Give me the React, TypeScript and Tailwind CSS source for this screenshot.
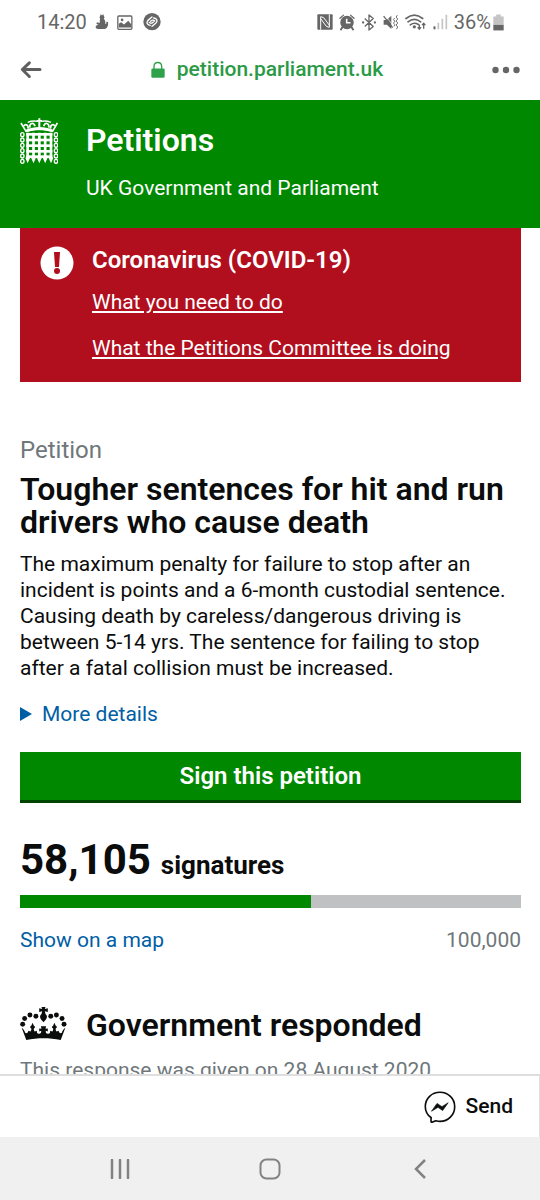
import React from 'react';

const signatures = 58105;
const target = 100000;

function FigureIcon() {
  return (
    <svg viewBox="284 42 42 48" className="h-4 w-[14px]" fill="#666" aria-hidden="true">
      <circle cx="305" cy="52" r="7" />
      <path d="M299 47l2-4 4 3zM311 47l-2-4-4 3zM299 56h12c3 5 5 10 4 16 3 0 4-3 3-7l5 1c2 13-4 21-12 21h-17c-5 0-8-3-8-6 0-4 4-6 9-6l-7-4 2-4 8 2z" />
    </svg>
  );
}

function PictureIcon() {
  return (
    <svg viewBox="356 44 48 46" className="h-[15px] w-4" aria-hidden="true">
      <rect x="358" y="47" width="43" height="41" rx="3" fill="none" stroke="#666" strokeWidth="4" />
      <circle cx="371" cy="59" r="4" fill="#666" />
      <path d="M361 82V71l7-5 9 7 13-11 9 10v10z" fill="#666" />
    </svg>
  );
}

function ShazamIcon() {
  return (
    <svg viewBox="428 42 54 54" className="size-[18px]" aria-hidden="true">
      <circle cx="455" cy="68" r="26" fill="#666" />
      <path
        d="M450 79c-8 0-12-7-9-12 2-4 6-6 14-13M447 70c4 5 9 2 12-1M460 57c8 0 12 7 9 12-2 4-6 6-14 13M463 66c-4-5-9-2-12 1"
        fill="none"
        stroke="#fff"
        strokeWidth="4"
        strokeLinecap="round"
      />
    </svg>
  );
}

function NfcIcon() {
  return (
    <svg viewBox="47 42 48 48" className="size-4" aria-hidden="true">
      <rect x="48" y="43" width="46" height="46" rx="3" fill="#666" />
      <path d="M58 89V50l9 3 18 24M84 43v39l-9-3-17-23" fill="none" stroke="#fff" strokeWidth="3" />
    </svg>
  );
}

function AlarmIcon() {
  return (
    <svg viewBox="116 40 50 52" className="h-[17px] w-4" aria-hidden="true">
      <path d="M119 53l11-10M163 53l-11-10" stroke="#666" strokeWidth="4" strokeLinecap="round" />
      <path d="M127 80l-5 8M155 80l5 8" stroke="#666" strokeWidth="6" strokeLinecap="round" />
      <circle cx="141" cy="66" r="21" fill="#666" />
      <path d="M140 54v13h12" stroke="#fff" strokeWidth="5" fill="none" />
    </svg>
  );
}

function BluetoothIcon() {
  return (
    <svg viewBox="188 40 46 52" className="h-[17px] w-4" aria-hidden="true">
      <path d="M198 54l26 24-13 11V43l13 11-26 24" fill="none" stroke="#666" strokeWidth="4" strokeLinejoin="round" />
      <circle cx="193" cy="66" r="3.500" fill="#666" />
      <circle cx="229" cy="66" r="3.500" fill="#666" />
    </svg>
  );
}

function MuteIcon() {
  return (
    <svg viewBox="254 40 50 52" className="h-[17px] w-4" aria-hidden="true">
      <path d="M256 58h10l14-13v41l-14-13h-10z" fill="#666" />
      <path d="M260 43l27 34" stroke="#fff" strokeWidth="2" />
      <path d="M256 46l28 36" stroke="#666" strokeWidth="4" />
      <path d="M290 52l-3 5 4 5-4 6 4 5-3 5M299 43l-4 6 5 6-5 6 5 7-5 6 5 6-4 7" fill="none" stroke="#666" strokeWidth="3" />
    </svg>
  );
}

function WifiIcon() {
  return (
    <svg viewBox="320 42 66 50" className="h-[17px] w-[22px]" aria-hidden="true">
      <path d="M323 55q25-20 50 0M329 65q19-15 38 0M336 74q12-9 24-1" fill="none" stroke="#666" strokeWidth="5" strokeLinecap="round" />
      <circle cx="348" cy="80" r="5" fill="#666" />
      <path d="M363 73v14M358 81l5 6 5-6M376 86V70M371 75l5-6 5 6" fill="none" stroke="#666" strokeWidth="4" />
    </svg>
  );
}

function SignalIcon() {
  return (
    <svg viewBox="398 42 44 48" className="h-4 w-[15px]" aria-hidden="true">
      <path d="M399 79h6v9h-6z" fill="#666" />
      <path d="M411 68h5v20h-5zM423 56h5v32h-5zM435 44h5v44h-5z" fill="#c4c4c4" />
    </svg>
  );
}

function BatteryIcon() {
  return (
    <svg viewBox="578 40 34 51" className="h-[17px] w-[11px]" aria-hidden="true">
      <path d="M588 41h14v6h9v26h-32V47h9z" fill="#c4c4c4" />
      <path d="M579 73h32v17h-32z" fill="#666" />
    </svg>
  );
}

function StatusBar() {
  return (
    <div className="flex h-11 items-center justify-between pr-9 pl-[37px] text-xl text-[#666]">
      <div className="flex items-center gap-2">
        <span>14:20</span>
        <FigureIcon />
        <div className="flex items-center gap-[10px]">
          <PictureIcon />
          <ShazamIcon />
        </div>
      </div>
      <div className="flex items-center gap-[6px]">
        <NfcIcon />
        <AlarmIcon />
        <BluetoothIcon />
        <MuteIcon />
        <WifiIcon />
        <SignalIcon />
        <div className="flex items-center gap-[2px]">
          <span>36%</span>
          <BatteryIcon />
        </div>
      </div>
    </div>
  );
}

function AddressBar() {
  return (
    <div className="flex h-14 items-center justify-between px-5 pb-[5px]">
      <button type="button" aria-label="Back">
        <svg viewBox="62 178 66 56" className="h-[19px] w-[22px]" fill="none" stroke="#5f5f5f" strokeWidth="9" strokeLinecap="round" aria-hidden="true">
          <path d="M70 206h52M90 186l-21 20 21 21" strokeLinejoin="round" />
        </svg>
      </button>
      <div className="flex items-center gap-3 text-[21px] font-medium text-[#2b9a46]">
        <svg viewBox="452 180 42 50" className="h-[17px] w-[14px]" aria-hidden="true">
          <path d="M461 204v-8c0-16 23-16 23 0v8" fill="none" stroke="#2fa14a" strokeWidth="4" />
          <rect x="453" y="202" width="40" height="28" rx="4" fill="#2fa14a" />
        </svg>
        <span>petition.parliament.uk</span>
      </div>
      <button type="button" aria-label="More options">
        <svg viewBox="0 0 28 8" className="h-2 w-7" fill="#666" aria-hidden="true">
          <circle cx="3.500" cy="4" r="3.200" />
          <circle cx="14" cy="4" r="3.200" />
          <circle cx="24.500" cy="4" r="3.200" />
        </svg>
      </button>
    </div>
  );
}

function PortcullisIcon() {
  const links = [103, 119, 135, 151, 167, 183];
  const bars = [80, 97.5, 115, 132.5, 150];
  const rails = [98, 115, 132, 149, 165];
  return (
    <svg viewBox="57 53 114 138" className="h-[46px] w-[38px]" fill="#fff" aria-hidden="true">
      <path d="M60 68l15 25c26-10 54-10 80 0l14-25" fill="none" stroke="#fff" strokeWidth="5" />
      <path d="M74 88c26-11 56-11 82 0l-4 7c-24-7-50-7-74 0z" />
      <path d="M68 77c6-8 15-3 13 8M87 82c-3-14 11-18 15-4M143 82c3-14-11-18-15-4M162 77c-6-8-15-3-13 8" fill="none" stroke="#fff" strokeWidth="5" />
      <path d="M80 66q14-6 30-3M120 63q16-3 30 3" fill="none" stroke="#fff" strokeWidth="4" />
      <path d="M112 54h6v5h5v5h-5v17h-6V64h-5v-5h5z" />
      {links.map((y) => (
        <g key={y} fill="none" stroke="#fff" strokeWidth="4">
          <ellipse cx="64" cy={y} rx="5" ry="6" />
          <ellipse cx="165" cy={y} rx="5" ry="6" />
        </g>
      ))}
      {bars.map((x) => (
        <path key={x} d={`M${x - 4} 97h8v73l3 3-7 16-7-16 3-3z`} />
      ))}
      {rails.map((y) => (
        <rect key={y} x="76" y={y} width="78" height="8" />
      ))}
    </svg>
  );
}

function CrownIcon() {
  const pearls = [
    [67, 134], [73, 117], [89, 106], [107, 110], [152, 110], [169, 106], [186, 117], [192, 134],
  ];
  return (
    <svg viewBox="59 80 142 104" className="mb-1 h-[35px] w-[47px]" fill="#0b0c0c" aria-hidden="true">
      {pearls.map(([x, y]) => (
        <circle key={x} cx={x} cy={y} r="7.500" />
      ))}
      <path d="M124 82h12l-2 6 9-2v11l-9-2 2 8c7 6 5 14-2 21l-4 4-4-4c-7-7-9-15-2-21l2-8-9 2V86l9 2z" />
      <path d="M64 145l14 37c34-7 70-7 104 0l14-37c-6 4-9 10-11 16-6 1-9-2-9-7l-7 2c-2-4-3-6-2-9 5-2 4-6 0-8l-4-9-4 9c-4 2-5 6 0 8 1 3 0 5-2 9l-7-2c1 6-2 10-7 9-5 0-7-4-6-9l6 2v-9l-7 1 2-8h-16l2 8-7-1v9l6-2c1 5-1 9-6 9-5 1-8-3-7-9l-7 2c-2-4-3-6-2-9 5-2 4-6 0-8l-4-9-4 9c-4 2-5 6 0 8 1 3 0 5-2 9l-7-2c0 5-3 8-9 7-2-6-5-12-11-16z" />
    </svg>
  );
}

function MessengerIcon() {
  return (
    <svg viewBox="130 86 98 98" className="size-8" aria-hidden="true">
      <path
        d="M152 168c-12-9-18-20-18-34 0-26 20-44 45-44s45 19 45 44-20 45-45 45c-5 0-9-1-13-2l-12 5c-3 1-3-8-2-14z"
        fill="#fff"
        stroke="#0b0c0c"
        strokeWidth="5"
        strokeLinejoin="round"
      />
      <path d="M153 148l17-24 15 10 19-12-17 24-14-10z" fill="#0b0c0c" stroke="#0b0c0c" strokeWidth="2" strokeLinejoin="round" />
    </svg>
  );
}

function Alert() {
  return (
    <section className="mr-[19px] ml-5 flex gap-[18px] bg-[#b10e1e] px-5 pt-4 pb-[21px] text-white">
      <svg viewBox="0 0 34 34" className="mt-[2px] size-[34px] shrink-0" aria-hidden="true">
        <circle cx="17" cy="17" r="16.500" fill="#fff" />
        <path d="M14 6h6l-1 15h-4z" fill="#b10e1e" />
        <circle cx="17" cy="25" r="3" fill="#b10e1e" />
      </svg>
      <div>
        <h2 className="text-2xl leading-8 font-semibold">Coronavirus (COVID-19)</h2>
        <ul className="mt-[13px] flex flex-col gap-5 text-[21px] leading-[26px]">
          <li><a href="#what-to-do" className="underline">What you need to do</a></li>
          <li><a href="#committee" className="underline">What the Petitions Committee is doing</a></li>
        </ul>
      </div>
    </section>
  );
}

export default function App() {
  return (
    <div className="flex h-dvh flex-col bg-white font-[Roboto,sans-serif] text-[#0b0c0c]">
      <StatusBar />
      <AddressBar />
      <div className="min-h-0 flex-1 overflow-y-auto [scrollbar-width:none]">
        <header className="flex gap-7 bg-[#008800] px-5 pt-[18px] pb-[26px] text-white">
          <PortcullisIcon />
          <div>
            <h1 className="text-[32px] leading-[44px] font-semibold">Petitions</h1>
            <p className="mt-[13px] text-[21px] leading-[27px]">UK Government and Parliament</p>
          </div>
        </header>
        <Alert />
        <main className="pt-[52px] pr-[19px] pl-5">
          <p className="text-2xl leading-8 text-[#6f777b]">Petition</p>
          <h2 className="mt-[7px] text-[32px] leading-[33px] font-semibold">Tougher sentences for hit and run drivers who cause death</h2>
          <p className="mt-3 text-[21px] leading-[26px]">
            The maximum penalty for failure to stop after an incident is points and a 6-month custodial sentence. Causing death by careless/dangerous driving is between 5-14 yrs. The sentence for failing to stop after a fatal collision must be increased.
          </p>
          <details className="mt-5 text-[21px] leading-[26px] text-[#005ea5]">
            <summary className="flex items-center gap-[10px]">
              <svg viewBox="0 0 12 14" className="h-[14px] w-3" fill="#005ea5" aria-hidden="true"><path d="M0 0l12 7-12 7z" /></svg>
              More details
            </summary>
          </details>
          <button type="button" className="mt-[25px] block w-full border-b-[3px] border-[#004400] bg-[#008800] pt-[11px] pb-[11px] text-2xl leading-[26px] font-semibold text-white">
            Sign this petition
          </button>
          <p className="mt-8 flex items-baseline gap-[10px] leading-[50px] font-bold">
            <span className="text-[42px]">58,105</span>
            <span className="text-[26px]">signatures</span>
          </p>
          <div className="mt-[5px] h-[13px] bg-[#bfc1c3]">
            <div className="h-full bg-[#008800]" style={{ width: `${(signatures / target) * 100}%` }} />
          </div>
          <div className="mt-[19px] flex justify-between text-[21px] leading-[26px]">
            <a href="#map" className="text-[#005ea5]">Show on a map</a>
            <span className="text-[#6f777b]">100,000</span>
          </div>
          <div className="mt-[52px] flex items-center gap-[19px]">
            <CrownIcon />
            <h2 className="text-[32px] leading-10 font-semibold">Government responded</h2>
          </div>
          <p className="mt-3 text-[21px] leading-[26px] text-[#6f777b]">This response was given on 28 August 2020</p>
        </main>
      </div>
      <div className="flex h-[63px] shrink-0 items-center justify-end border-t-2 border-r border-[#dedede] bg-white pr-[26px]">
        <button type="button" className="flex items-center gap-[10px] text-[21px] font-medium">
          <MessengerIcon />
          Send
        </button>
      </div>
      <nav aria-label="System" className="grid h-[63px] shrink-0 grid-cols-[4fr_1fr_4fr] place-items-center bg-[#f0f0f0]">
        <button type="button" aria-label="Recent apps">
          <svg viewBox="0 0 20 20" className="size-5" stroke="#828282" strokeWidth="2.500" strokeLinecap="round" aria-hidden="true"><path d="M2 1v18M10 1v18M18 1v18" /></svg>
        </button>
        <button type="button" aria-label="Home">
          <svg viewBox="0 0 22 22" className="size-[22px]" fill="none" stroke="#828282" strokeWidth="2" aria-hidden="true"><rect x="1.500" y="1.500" width="19" height="19" rx="6" /></svg>
        </button>
        <button type="button" aria-label="System back">
          <svg viewBox="0 0 12 20" className="h-5 w-3" fill="none" stroke="#828282" strokeWidth="2.500" aria-hidden="true"><path d="M11 1l-9 9 9 9" /></svg>
        </button>
      </nav>
    </div>
  );
}
